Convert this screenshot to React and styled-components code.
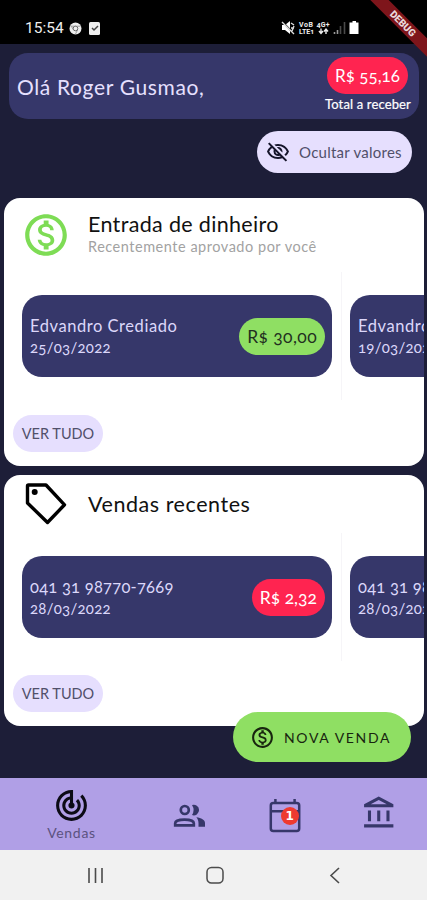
import React from 'react'
import styled, { createGlobalStyle } from 'styled-components'
import {
  MdOutlineMonetizationOn,
  MdOutlineVisibilityOff,
  MdOutlineTrackChanges,
  MdOutlineAccountBalance,
} from 'react-icons/md'

const entries = [
  { name: 'Edvandro Crediado', date: '25/03/2022', value: 'R$ 30,00' },
  { name: 'Edvandro Crediado', date: '19/03/2022', value: 'R$ 30,00' },
]

const sales = [
  { name: '041 31 98770-7669', date: '28/03/2022', value: 'R$ 2,32' },
  { name: '041 31 98770-7669', date: '28/03/2022', value: 'R$ 2,32' },
]

const StatusIcons = () => (
  <svg width="80" height="16" viewBox="0 0 80 16">
    <path d="M1 5h3l5-4v13l-5-4H1z" fill="#fff" />
    <path d="M1 1l12 13" stroke="#000" strokeWidth="1.5" />
    <path d="M1 2l12 12M10 3l3 2M10 8h3M11 11l2-5" stroke="#ddd" strokeWidth="1.4" />
    <g fill="#eee" fontFamily="Roboto, sans-serif" fontWeight="700" fontSize="7">
      <text x="18" y="7" textLength="14">VoB</text>
      <text x="18" y="14" textLength="15">LTE1</text>
      <text x="35.5" y="7" textLength="13">4G+</text>
    </g>
    <path d="M40 8.500v4M38 11l2 2.500 2-2.500M45 14v-4M43 11.500L45 9l2 2.500" stroke="#eee" strokeWidth="1.400" fill="none" />
    <path d="M53.500 12v2M56.500 10v4" stroke="#999" strokeWidth="1.6" />
    <path d="M59.500 6v8M63.500 2v12" stroke="#4a4a4a" strokeWidth="1.6" />
    <path d="M71.500 1h3.500v1.500h2.500v11.500h-9V2.500h3z" fill="#fff" />
  </svg>
)

const TagIcon = () => (
  <svg width="50" height="50" viewBox="0 0 50 50" fill="none" stroke="#000" strokeWidth="3.400" strokeLinejoin="round">
    <path d="M7.500 6h17.500L43.500 25.800 26.500 43.500 6.500 24V7q0-1 1-1z" />
    <circle cx="13.700" cy="13" r="3" fill="#000" stroke="none" />
  </svg>
)

const PeopleIcon = () => (
  <svg width="34" height="26" viewBox="0 0 34 26" fill="#36376a">
    <circle cx="11.800" cy="8" r="4" fill="none" stroke="#36376a" strokeWidth="2.700" />
    <path d="M19 3.100a5.300 5.300 0 1 1 0 10q3.200-5 0-10z" />
    <path d="M2.200 23.300v-2c0-5 18.600-5 18.600 0v2z" fill="none" stroke="#36376a" strokeWidth="2.700" />
    <path d="M23.300 15.300c5 .9 8.700 2.500 8.700 5.700v3.700h-6.500v-3.500c0-2.400-.7-4.200-2.200-5.900z" />
  </svg>
)

const CalendarIcon = () => (
  <svg width="32" height="36" viewBox="0 0 32 36" fill="none" stroke="#36376a" strokeWidth="2.500">
    <rect x="1.800" y="5" width="28.400" height="28" rx="2.500" />
    <path d="M2 13.300h28M6.400 1v4M25.600 1v4" />
  </svg>
)

const Section = ({ icon, title, subtitle, items, positive, tall }) => (
  <Panel>
    <PanelHeader $tall={tall}>
      <PanelIcon $green={positive}>{icon}</PanelIcon>
      <div>
        <PanelTitle $wide={!tall}>{title}</PanelTitle>
        {subtitle && <PanelSubtitle>{subtitle}</PanelSubtitle>}
      </div>
    </PanelHeader>
    <List>
      {items.map((item, i) => (
        <Slot key={i}>
          <Item>
            <div>
              <ItemName $digits={!positive}>{item.name}</ItemName>
              <ItemDate>{item.date}</ItemDate>
            </div>
            <Value $green={positive}>{item.value}</Value>
          </Item>
        </Slot>
      ))}
    </List>
    <SeeAll $gap={tall ? 15 : 14}>VER TUDO</SeeAll>
  </Panel>
)

const App = () => {
  return (
    <Screen>
      <GlobalStyle />
      <StatusBar>
        <Clock>15:54</Clock>
        <svg width="32" height="13" viewBox="0 0 32 13">
          <circle cx="6.500" cy="6.500" r="6" fill="#eee" />
          <circle cx="6.500" cy="6.500" r="2.300" fill="#eee" stroke="#666" strokeWidth="1" />
          <path d="M1.500 4.200h5M6.500 4.200h5M4.500 8l-2-3.500M8.500 8l-2 4" stroke="#888" strokeWidth="0.800" />
          <rect x="20" y="0" width="11" height="13" rx="1.500" fill="#eee" />
          <path d="M23 6l2 2 4-4" stroke="#444" strokeWidth="1.500" fill="none" />
        </svg>
        <StatusRight>
          <StatusIcons />
        </StatusRight>
      </StatusBar>
      <Content>
        <Greeting>
          <Hello>Olá Roger Gusmao,</Hello>
          <Total>
            <TotalValue>R$ 55,16</TotalValue>
            <TotalLabel>Total a receber</TotalLabel>
          </Total>
        </Greeting>
        <HideButton>
          <MdOutlineVisibilityOff size={24} color="#15142a" />
          <span>Ocultar valores</span>
        </HideButton>
        <Panels>
          <Section
            icon={<MdOutlineMonetizationOn size={50} />}
            title="Entrada de dinheiro"
            subtitle="Recentemente aprovado por você"
            items={entries}
            positive
            tall
          />
          <Section icon={<TagIcon />} title="Vendas recentes" items={sales} />
        </Panels>
        <NewSale>
          <MdOutlineMonetizationOn size={25} />
          <span>NOVA VENDA</span>
        </NewSale>
      </Content>
      <TabBar>
        <Tab $active>
          <MdOutlineTrackChanges size={37} />
          <TabLabel>Vendas</TabLabel>
        </Tab>
        <Tab $drop={1}>
          <PeopleIcon />
        </Tab>
        <Tab $drop={4}>
          <CalendarIcon />
          <Badge>1</Badge>
        </Tab>
        <Tab>
          <MdOutlineAccountBalance size={37} />
        </Tab>
      </TabBar>
      <SystemBar>
        <svg width="18" height="18" viewBox="0 0 18 18" stroke="#4b4b4b" strokeWidth="1.600">
          <path d="M3 2v15M9.500 2v15M16 2v15" />
        </svg>
        <svg width="18" height="18" viewBox="0 0 18 18" fill="none" stroke="#4b4b4b" strokeWidth="1.500">
          <rect x="1" y="1.500" width="16" height="15.500" rx="4.500" />
        </svg>
        <svg width="18" height="18" viewBox="0 0 18 18" fill="none" stroke="#4b4b4b" strokeWidth="1.600">
          <path d="M13 2L5 9.500l8 7.500" />
        </svg>
      </SystemBar>
      <Ribbon>DEBUG</Ribbon>
    </Screen>
  )
}

const GlobalStyle = createGlobalStyle`
  * {
    box-sizing: border-box;
  }
  body {
    margin: 0;
    background: #1d1e38;
  }
  svg {
    display: block;
    flex-shrink: 0;
  }
`

const Screen = styled.div`
  position: relative;
  width: 427px;
  height: 900px;
  display: flex;
  flex-direction: column;
  overflow: hidden;
  background: #1d1e38;
  font-family: Lato, sans-serif;
  font-variant-numeric: oldstyle-nums;
  white-space: nowrap;
`

const StatusBar = styled.div`
  height: 44px;
  flex-shrink: 0;
  display: flex;
  align-items: center;
  padding: 12px 0 0 25px;
  background: #000;
`

const Clock = styled.span`
  width: 44px;
  font: 400 15.5px/18px Roboto, sans-serif;
  color: #eee;
`

const StatusRight = styled.div`
  margin: 0 66px 0 auto;
`

const Ribbon = styled.div`
  position: absolute;
  top: 17px;
  left: 343px;
  width: 120px;
  height: 13px;
  transform: rotate(45deg);
  background: #7e151b;
  color: #ead9dc;
  font: 900 10px/13px Roboto, sans-serif;
  text-align: center;
`

const Content = styled.div`
  position: relative;
  height: 734px;
  flex-shrink: 0;
  display: flex;
  flex-direction: column;
  padding: 9px 3px 0 4px;
`

const Greeting = styled.div`
  height: 66px;
  margin: 0 5px;
  padding: 4px 8px 0;
  display: flex;
  justify-content: space-between;
  border-radius: 19px;
  background: #36376a;
`

const Hello = styled.div`
  padding-top: 3px;
  font-size: 21px;
  line-height: 54px;
  letter-spacing: 0.65px;
  color: #e6e0ff;
`

const Total = styled.div`
  display: flex;
  flex-direction: column;
  align-items: flex-end;
`

const TotalValue = styled.div`
  width: 81px;
  height: 37px;
  margin-right: 3px;
  border-radius: 19px;
  background: #ff2450;
  color: #fff;
  font-size: 17px;
  line-height: 37px;
  text-align: center;
`

const TotalLabel = styled.div`
  font-size: 13px;
  line-height: 21px;
  letter-spacing: 0.15px;
  -webkit-text-stroke: 0.2px #fff;
  color: #fff;
`

const HideButton = styled.div`
  width: 155px;
  height: 42px;
  margin: 12px 12px 0 auto;
  padding-left: 9px;
  display: flex;
  align-items: center;
  gap: 9px;
  border-radius: 21px;
  background: #e6dffe;
  color: #51506a;
  font-size: 15px;
  letter-spacing: 0.25px;
`

const Panels = styled.div`
  display: flex;
  flex-direction: column;
  gap: 9px;
  margin-top: 25px;
`

const Panel = styled.div`
  padding-bottom: 14px;
  border-radius: 16px;
  background: #fff;
  overflow: hidden;
`

const PanelHeader = styled.div`
  height: ${({ $tall }) => ($tall ? 74 : 58)}px;
  display: flex;
  align-items: center;
  gap: 17px;
  padding: 0 0 ${({ $tall }) => ($tall ? 2 : 0)}px 17px;
`

const PanelIcon = styled.div`
  width: 50px;
  padding-top: ${({ $green }) => ($green ? 2 : 0)}px;
  color: ${({ $green }) => ($green ? '#7edc55' : '#000')};
`

const PanelTitle = styled.div`
  font-size: 21.5px;
  line-height: 25px;
  letter-spacing: ${({ $wide }) => ($wide ? 0.55 : 0.33)}px;
  color: #111;
`

const PanelSubtitle = styled.div`
  font-size: 14.5px;
  line-height: 20px;
  letter-spacing: 0.52px;
  color: #a2a2a2;
`

const List = styled.div`
  display: flex;
  height: 128px;
`

const Slot = styled.div`
  width: 328px;
  flex-shrink: 0;
  display: flex;
  align-items: center;
  padding: 0 0 0 8px;

  &:first-child {
    width: 338px;
    padding-left: 18px;
    border-right: 1px solid #f6f5f8;
  }
`

const Item = styled.div`
  width: 310px;
  height: 82px;
  padding: 0 7px 0 8px;
  display: flex;
  align-items: center;
  justify-content: space-between;
  border-radius: 20px;
  background: #36376a;
  color: #dcd7fa;
`

const ItemName = styled.div`
  font-size: 16.5px;
  line-height: 22px;
  letter-spacing: ${({ $digits }) => ($digits ? 0.25 : 0.55)}px;
`

const ItemDate = styled.div`
  font-size: 15px;
  line-height: 21px;
  letter-spacing: 0.25px;
`

const Value = styled.div`
  height: 37px;
  padding: 0 8px;
  border-radius: 19px;
  font-size: 17.5px;
  line-height: 37px;
  letter-spacing: ${({ $green }) => ($green ? 0.4 : 0)}px;
  background: ${({ $green }) => ($green ? '#8fdf63' : '#ff2450')};
  color: ${({ $green }) => ($green ? '#22301f' : '#fff')};
`

const SeeAll = styled.div`
  width: 90px;
  height: 37px;
  margin: ${({ $gap }) => $gap}px 0 0 9px;
  border-radius: 19px;
  background: #e6dffe;
  color: #51506a;
  font-size: 14.5px;
  line-height: 37px;
  text-align: center;
`

const NewSale = styled.div`
  position: absolute;
  left: 233px;
  top: 668px;
  width: 178px;
  height: 50px;
  padding-left: 17px;
  display: flex;
  align-items: center;
  gap: 9px;
  border-radius: 25px;
  background: #8fdf63;
  color: #18250f;
  font-size: 14px;
  letter-spacing: 1.65px;
`

const TabBar = styled.div`
  height: 72px;
  flex-shrink: 0;
  display: flex;
  background: #b09fe6;
`

const Tab = styled.div`
  position: relative;
  width: ${({ $active }) => ($active ? 143 : 94.7)}px;
  display: flex;
  flex-direction: column;
  align-items: center;
  justify-content: center;
  color: ${({ $active }) => ($active ? '#0c0b16' : '#36376a')};
  padding-top: ${({ $drop = 0 }) => $drop}px;
  padding-bottom: ${({ $active, $drop }) => ($active || $drop ? 0 : 2)}px;
`

const TabLabel = styled.div`
  font-size: 14px;
  line-height: 17px;
  letter-spacing: 0.7px;
  color: #5b5280;
`

const Badge = styled.div`
  position: absolute;
  left: 43px;
  top: 29px;
  width: 18px;
  height: 18px;
  border-radius: 50%;
  background: #ee3a30;
  color: #fff;
  font: 700 12px/18px 'DejaVu Sans', sans-serif;
  text-align: center;
`

const SystemBar = styled.div`
  height: 50px;
  flex-shrink: 0;
  display: flex;
  align-items: center;
  justify-content: space-between;
  padding: 0 83px 0 86px;
  background: #f1f1f1;
`

export default App
